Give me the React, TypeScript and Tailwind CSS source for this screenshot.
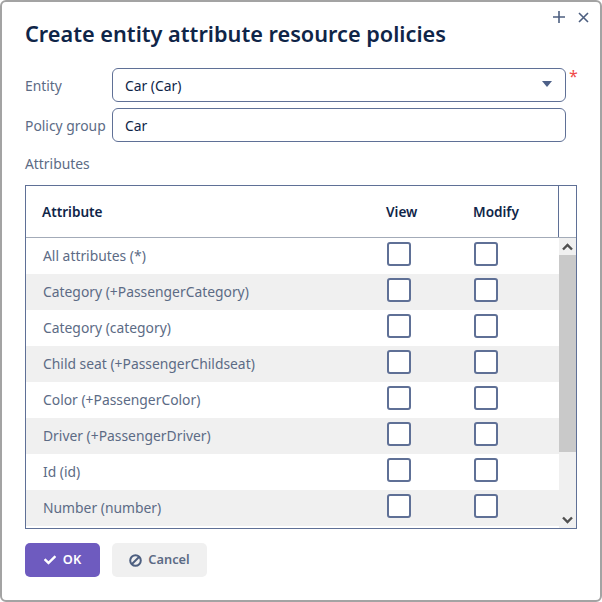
import React from "react";
import { FaCheck } from "react-icons/fa";

const rows = [
  "All attributes (*)",
  "Category (+PassengerCategory)",
  "Category (category)",
  "Child seat (+PassengerChildseat)",
  "Color (+PassengerColor)",
  "Driver (+PassengerDriver)",
  "Id (id)",
  "Number (number)",
];

function Checkbox() {
  return <div className="w-6 h-6 mb-1 bg-white border-2 border-[#5f7096] rounded-[3px]" />;
}

function Chevron({ up }: { up?: boolean }) {
  return (
    <svg width="11" height="8" viewBox="0 0 11 8" fill="none" stroke="#505050" strokeWidth="2.4">
      <path d={up ? "M1 6.5 5.5 2 10 6.5" : "M1 1.5 5.5 6 10 1.5"} />
    </svg>
  );
}

export default function App() {
  return (
    <div className="w-[602px] h-[602px] bg-white border-2 border-[#a3a3a3] rounded-[6px] relative flex flex-col pl-[23px] pr-[23px] font-['Noto_Sans',sans-serif] text-[13.87px] overflow-hidden">
      <div className="absolute top-[9px] right-[11px] flex items-center gap-[13px] text-[#4d5f80]">
        <svg width="12" height="12" viewBox="0 0 12 12" stroke="currentColor" strokeWidth="1.6">
          <path d="M6 0v12M0 6h12" />
        </svg>
        <svg width="11" height="11" viewBox="0 0 11 11" stroke="currentColor" strokeWidth="1.6">
          <path d="M1 1l9 9M10 1l-9 9" />
        </svg>
      </div>

      <h1 className="mt-[15px] h-[34px] leading-[34px] text-[21.7px] font-semibold text-[#0f2548]">
        Create entity attribute resource policies
      </h1>

      <div className="mt-[17px] flex items-center h-[34px]">
        <label className="w-[87px] pt-[2px] text-[#5c6b85]">Entity</label>
        <div className="relative w-[454px] h-[34px] pt-[2px] border border-[#5f7096] rounded-[6px] flex items-center pl-3 pr-[13px] justify-between text-[#0f2548]">
          <span>Car (Car)</span>
          <div className="w-0 h-0 mb-[5px] border-x-[5px] border-x-transparent border-t-[6px] border-t-[#4d6088]" />
          <span className="absolute left-[456px] top-[-3px] text-[#f04a4a] text-[16px] leading-[20px]">*</span>
        </div>
      </div>

      <div className="mt-[6px] flex items-center h-[34px]">
        <label className="w-[87px] pt-[2px] text-[#5c6b85]">Policy group</label>
        <div className="w-[454px] h-[34px] pt-[2px] border border-[#5f7096] rounded-[6px] flex items-center pl-3 text-[#0f2548]">
          Car
        </div>
      </div>

      <div className="mt-[11px] h-[22px] leading-[22px] text-[#5c6b85]">Attributes</div>

      <div className="mt-[10px] w-[552px] h-[344px] border border-[#5f7096] flex flex-col">
        <div className="h-[52px] shrink-0 flex items-center border-b border-[#a3abb8] font-semibold text-[#0f2548] text-[13.6px]">
          <div className="w-[360px] pl-4 pt-[2px]">Attribute</div>
          <div className="w-[87px] pt-[2px]">View</div>
          <div className="w-[85px] pt-[2px]">Modify</div>
          <div className="h-full border-l border-[#5f7096]" />
        </div>
        <div className="flex flex-1 min-h-0">
          <div className="flex-1">
            {rows.map((name, i) => (
              <div key={name} className={`h-9 flex items-center ${i % 2 ? "bg-[#f0f0f0]" : "bg-white"}`}>
                <div className="w-[361px] pl-[17px] h-[20px] leading-[20px] mb-[1px] text-[#5c6b85]">{name}</div>
                <div className="w-[87px]">
                  <Checkbox />
                </div>
                <Checkbox />
              </div>
            ))}
          </div>
          <div className="w-[17px] bg-[#f0f0f0] flex flex-col items-center">
            <div className="h-[17px] shrink-0 flex items-center justify-center">
              <Chevron up />
            </div>
            <div className="w-full h-[197px] shrink-0 bg-[#c9c9c9]" />
            <div className="flex-1" />
            <div className="h-[17px] shrink-0 flex items-center justify-center">
              <Chevron />
            </div>
          </div>
        </div>
      </div>

      <div className="mt-[14px] flex gap-3 text-[12.8px] font-semibold">
        <button className="w-[75px] h-[34px] rounded-[5px] bg-[#6e5bbf] text-white flex items-center justify-center gap-[7px]">
          <FaCheck size={12} />
          OK
        </button>
        <button className="w-[95px] h-[34px] rounded-[5px] bg-[#f0f0f0] text-[#5c6b85] flex items-center justify-center gap-[6px]">
          <svg width="13" height="13" viewBox="0 0 13 13" fill="none" stroke="#4d5f80" strokeWidth="2">
            <circle cx="6.5" cy="6.5" r="5.3" />
            <path d="M3 10 10 3" />
          </svg>
          Cancel
        </button>
      </div>
    </div>
  );
}
